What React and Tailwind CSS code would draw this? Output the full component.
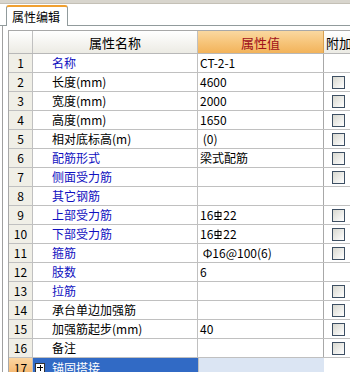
import React from 'react'

const rows = [
  { n: 1, name: '名称', blue: true, value: 'CT-2-1', check: false },
  { n: 2, name: '长度(mm)', value: '4600', check: true },
  { n: 3, name: '宽度(mm)', value: '2000', check: true },
  { n: 4, name: '高度(mm)', value: '1650', check: true },
  { n: 5, name: '相对底标高(m)', value: ' (0)', check: true },
  { n: 6, name: '配筋形式', blue: true, value: '梁式配筋', check: true },
  { n: 7, name: '侧面受力筋', blue: true, value: '', check: true },
  { n: 8, name: '其它钢筋', blue: true, value: '', check: false },
  { n: 9, name: '上部受力筋', blue: true, value: 'bar', check: true },
  { n: 10, name: '下部受力筋', blue: true, value: 'bar', check: true },
  { n: 11, name: '箍筋', blue: true, value: ' Φ16@100(6)', check: true },
  { n: 12, name: '肢数', blue: true, value: '6', check: false },
  { n: 13, name: '拉筋', blue: true, value: '', check: true },
  { n: 14, name: '承台单边加强筋', value: '', check: true },
  { n: 15, name: '加强筋起步(mm)', value: '40', check: true },
  { n: 16, name: '备注', value: '', check: true },
]

// HRB400 grade mark, no unicode char for it
function Grade3() {
  return (
    <svg width="8" height="10" viewBox="0 0 8 10" className="inline-block mx-[1px]">
      <rect x="1" y="2.5" width="6" height="4" fill="none" stroke="#000" strokeWidth="1" />
      <line x1="4" y1="0.5" x2="4" y2="9" stroke="#000" strokeWidth="1" />
      <line x1="0.5" y1="9.5" x2="7.5" y2="9.5" stroke="#000" strokeWidth="1" />
    </svg>
  )
}

function CheckBox() {
  return (
    <div className="ml-[8px] w-[13px] h-[13px] border border-[#3d4f63] bg-gradient-to-br from-[#d8d8d0] to-white" />
  )
}

function Row({ r }) {
  return (
    <div className="flex h-[19px] border-b border-[#c0c0c0]">
      <div className="w-[24px] shrink-0 border-r border-[#c0c0c0] bg-[#f0efe7] flex items-center justify-center text-black">
        {r.n}
      </div>
      <div
        className={`w-[165px] shrink-0 border-r border-[#c0c0c0] flex items-center pl-[19px] whitespace-pre ${
          r.blue ? 'text-[#1010c0]' : 'text-black'
        }`}
      >
        {r.name}
      </div>
      <div className="w-[126px] shrink-0 border-r border-[#a8a8a8] flex items-center pl-[2px] text-black whitespace-pre">
        {r.value === 'bar' ? (
          <>
            16<Grade3 />22
          </>
        ) : (
          r.value
        )}
      </div>
      <div className="w-[60px] shrink-0 border-r border-[#c0c0c0] flex items-center">
        {r.check && <CheckBox />}
      </div>
    </div>
  )
}

export default function App() {
  return (
    <div
      className="w-[350px] h-[372px] overflow-hidden bg-white text-[12px] leading-none"
      style={{ fontFamily: '"SimSun", "Noto Sans CJK SC", sans-serif' }}
    >
      {/* top strip */}
      <div className="h-[4px] bg-[#d8d5cd] border-b border-[#c4c0b6]" />

      {/* tab bar */}
      <div className="flex h-[22px] items-end">
        <div className="w-[6px] h-full border-b border-[#919b9c]" />
        <div className="w-[62px] h-[21px] bg-white border-t-2 border-x border-t-[#f0a030] border-x-[#919b9c] rounded-t-[3px] flex items-center pl-[5px] text-black text-[12px]">
          属性编辑
        </div>
        <div className="flex-1 h-full border-b border-[#919b9c]" />
      </div>

      {/* panel */}
      <div className="ml-[2px] border-l border-[#a0a0a0] h-full pt-[4px]">
        <div className="ml-[5px] border-l border-t border-[#a8a8a8] w-[400px]">
          {/* header */}
          <div className="flex h-[23px] border-b border-[#b8b8b8]">
            <div className="w-[24px] shrink-0 border-r border-[#c0c0c0] bg-gradient-to-b from-white to-[#ecebe4]" />
            <div className="w-[165px] shrink-0 border-r border-[#c0c0c0] bg-gradient-to-b from-white to-[#ecebe4] flex items-center justify-center text-black text-[13px]">
              属性名称
            </div>
            <div className="w-[126px] shrink-0 border-r border-[#d8a050] bg-gradient-to-b from-[#fad8a0] via-[#f7c57a] to-[#f2b35a] flex items-center justify-center text-[#a0101a] text-[13px]">
              属性值
            </div>
            <div className="w-[60px] shrink-0 bg-gradient-to-b from-white to-[#ecebe4] flex items-center pl-[2px] text-black text-[13px]">
              附加
            </div>
          </div>

          {rows.map((r) => (
            <Row key={r.n} r={r} />
          ))}

          {/* selected row */}
          <div className="flex h-[19px]">
            <div className="w-[24px] shrink-0 border-r border-[#c0c0c0] bg-gradient-to-b from-[#fbd6a2] to-[#f4b062] flex items-center justify-center text-black">
              17
            </div>
            <div className="w-[165px] shrink-0 bg-[#316ac5] flex items-center pl-[2px] text-white">
              <div className="w-[10px] h-[10px] bg-white border border-[#333] relative mr-[7px]">
                <div className="absolute left-[1px] right-[1px] top-[3.5px] h-px bg-black" />
                <div className="absolute top-[1px] bottom-[1px] left-[3.5px] w-px bg-black" />
              </div>
              锚固搭接
            </div>
            <div className="w-[126px] shrink-0 border-l border-[#c0c0c0] bg-[#dbe5f3]" />
            <div className="w-[60px] shrink-0 bg-white" />
          </div>
        </div>
      </div>
    </div>
  )
}
